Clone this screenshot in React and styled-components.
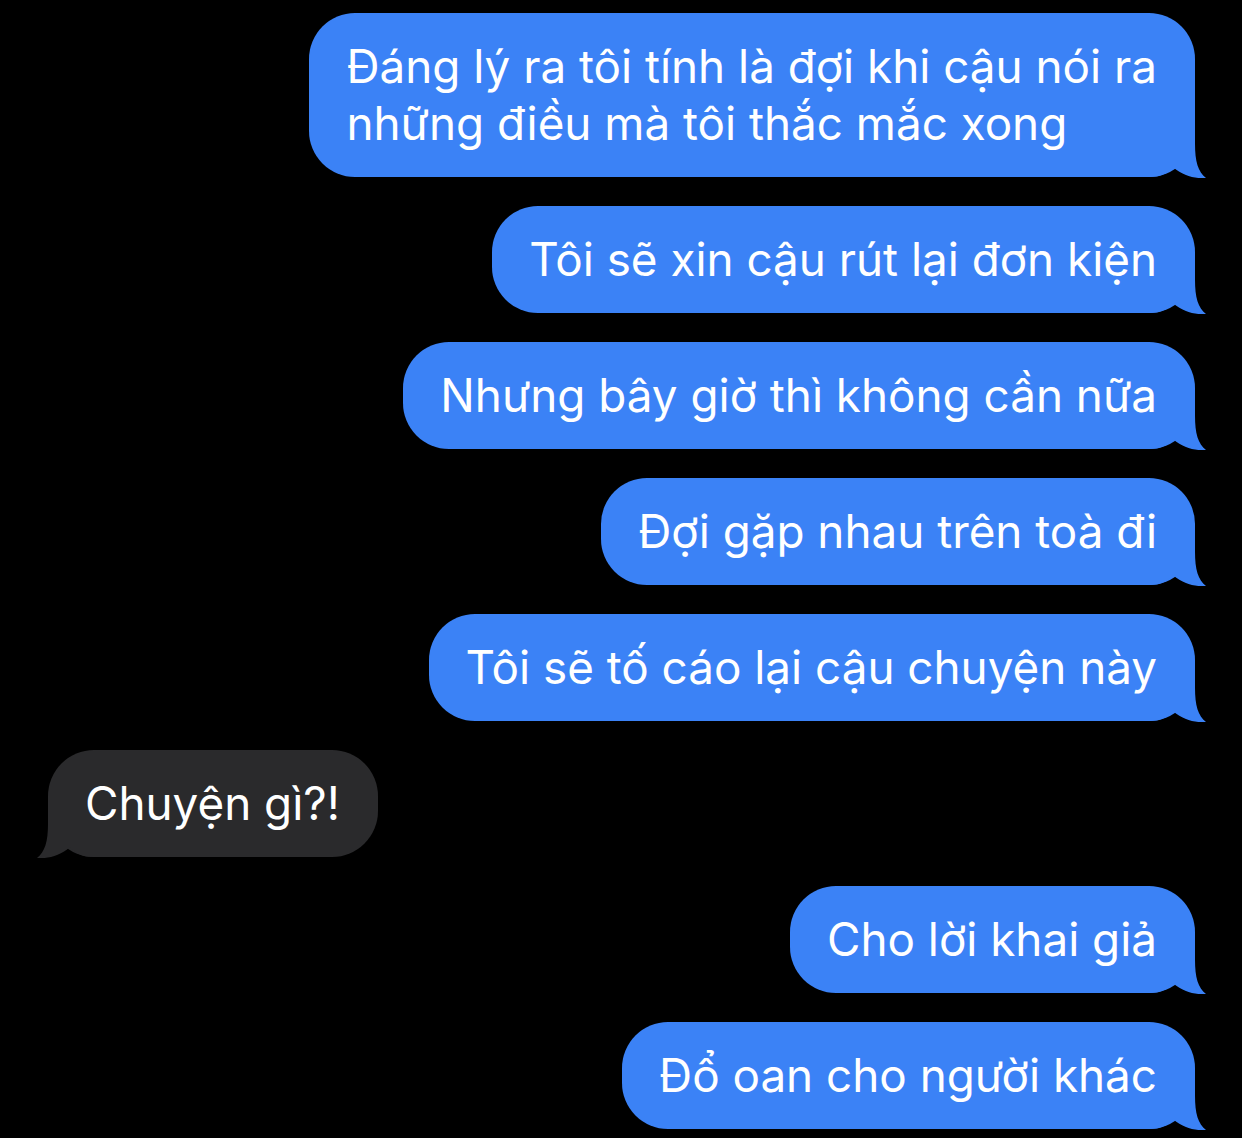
import React from "react";
import styled, { createGlobalStyle } from "styled-components";

const Global = createGlobalStyle`
  html, body { margin: 0; padding: 0; background: #000; }
  body { font-family: Inter, "Noto Sans", "Liberation Sans", sans-serif; }
`;

const Thread = styled.div`
  display: flex;
  flex-direction: column;
  gap: 29px;
  padding: 13px 47px 0 48px;
  width: 1242px;
  box-sizing: border-box;
  min-height: 1138px;
  background: #000;
`;

const Row = styled.div`
  display: flex;
  justify-content: ${(p) => (p.$sent ? "flex-end" : "flex-start")};
`;

const Bubble = styled.div`
  position: relative;
  background: ${(p) => (p.$sent ? "#3b82f6" : "#2a2a2c")};
  color: #fff;
  border-radius: 46px;
  padding: 25px 38px 25px 37px;
  font-size: 45.8px;
  line-height: 57px;
  letter-spacing: 0;
  white-space: nowrap;
`;

const Tail = styled.svg`
  position: absolute;
  bottom: -1px;
  ${(p) => (p.$sent ? "right: -11px;" : "left: -11px; transform: scaleX(-1);")}
  width: 56px;
  height: 60px;
  fill: ${(p) => (p.$sent ? "#3b82f6" : "#2a2a2c")};
`;

const Line = styled.div`
  position: relative;
`;

const messages = [
  { sent: true, lines: ["Đáng lý ra tôi tính là đợi khi cậu nói ra", "những điều mà tôi thắc mắc xong"] },
  { sent: true, lines: ["Tôi sẽ xin cậu rút lại đơn kiện"] },
  { sent: true, lines: ["Nhưng bây giờ thì không cần nữa"] },
  { sent: true, lines: ["Đợi gặp nhau trên toà đi"] },
  { sent: true, lines: ["Tôi sẽ tố cáo lại cậu chuyện này"] },
  { sent: false, lines: ["Chuyện gì?!"] },
  { sent: true, lines: ["Cho lời khai giả"] },
  { sent: true, lines: ["Đổ oan cho người khác"] },
];

export default function App() {
  return (
    <>
      <Global />
      <Thread>
        {messages.map((m, i) => (
          <Row key={i} $sent={m.sent}>
            <Bubble $sent={m.sent}>
              <Tail $sent={m.sent} viewBox="0 0 56 60">
                <path d="M0 0 H45 V26 C45 43 48 54 56 60 C46 61 33 58 23 49 C17 56 9 59 0 59 Z" />
              </Tail>
              {m.lines.map((l, j) => (
                <Line key={j}>{l}</Line>
              ))}
            </Bubble>
          </Row>
        ))}
      </Thread>
    </>
  );
}
